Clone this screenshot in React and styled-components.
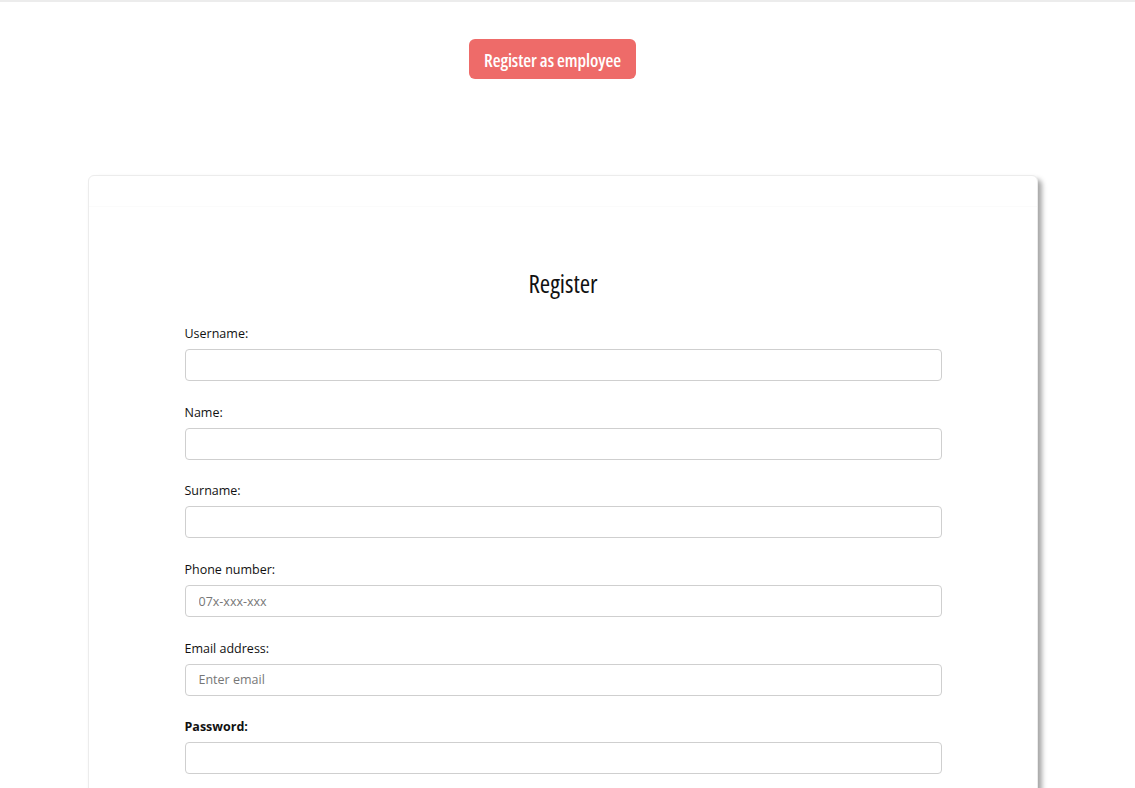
import React from "react";
import styled, { createGlobalStyle } from "styled-components";

const Global = createGlobalStyle`
  html, body { margin: 0; padding: 0; background: #fff; }
  body { font-family: "Open Sans", "Noto Sans", sans-serif; color: #212529; }
  * { box-sizing: border-box; }
`;

const Page = styled.div`
  border-top: 2px solid #ececec;
  min-height: 788px;
`;

const TopBar = styled.div`
  display: flex;
  justify-content: center;
  padding: 37px 30px 0 0;
`;

const PrimaryButton = styled.button`
  width: 167px;
  height: 40px;
  padding: 2px 0 0;
  border: none;
  border-radius: 6px;
  background: #ee6b69;
  color: #fff;
  font-family: "Open Sans", sans-serif;
  font-stretch: 78%;
  font-weight: 600;
  font-size: 18px;
  letter-spacing: -0.1px;
  cursor: pointer;
`;

const Card = styled.div`
  width: 950px;
  margin: 96px 0 0 88px;
  background: #fff;
  border: 1px solid #ececec;
  border-radius: 6px;
  box-shadow: 4px 4px 5px rgba(0, 0, 0, 0.35);
`;

const CardHeader = styled.div`
  height: 31px;
  border-bottom: 1px solid #fbfbfb;
`;

const Form = styled.form`
  width: 757px;
  margin: 0 auto;
  padding-top: 61px;
  padding-bottom: 40px;
`;

const Title = styled.h2`
  margin: 0 0 25px;
  text-align: center;
  font-family: "Open Sans", sans-serif;
  font-stretch: 82%;
  font-weight: 400;
  font-size: 25px;
  line-height: 30px;
  color: #111;
`;

const Group = styled.div`
  margin-bottom: 20.7px;
`;

const Label = styled.label`
  display: block;
  font-size: 12.5px;
  line-height: 20px;
  padding-top: 1px;
  margin-bottom: 5px;
  color: #111;
  font-weight: ${(p) => (p.$bold ? 700 : 400)};
`;

const Input = styled.input`
  display: block;
  width: 100%;
  height: 32px;
  border: 1px solid #cfcfcf;
  border-radius: 4px;
  padding: 0 13px;
  font-family: "Open Sans", sans-serif;
  font-size: 12.5px;
  color: #333;
  outline: none;
  &::placeholder { color: #777; }
`;

const fields = [
  { label: "Username:" },
  { label: "Name:" },
  { label: "Surname:" },
  { label: "Phone number:", placeholder: "07x-xxx-xxx" },
  { label: "Email address:", placeholder: "Enter email", type: "email" },
  { label: "Password:", type: "password", bold: true },
];

export default function App() {
  return (
    <>
      <Global />
      <Page>
        <TopBar>
          <PrimaryButton>Register as employee</PrimaryButton>
        </TopBar>
        <Card>
          <CardHeader />
          <Form onSubmit={(e) => e.preventDefault()}>
            <Title>Register</Title>
            {fields.map((f) => (
              <Group key={f.label}>
                <Label $bold={f.bold}>{f.label}</Label>
                <Input type={f.type || "text"} placeholder={f.placeholder || ""} />
              </Group>
            ))}
          </Form>
        </Card>
      </Page>
    </>
  );
}
